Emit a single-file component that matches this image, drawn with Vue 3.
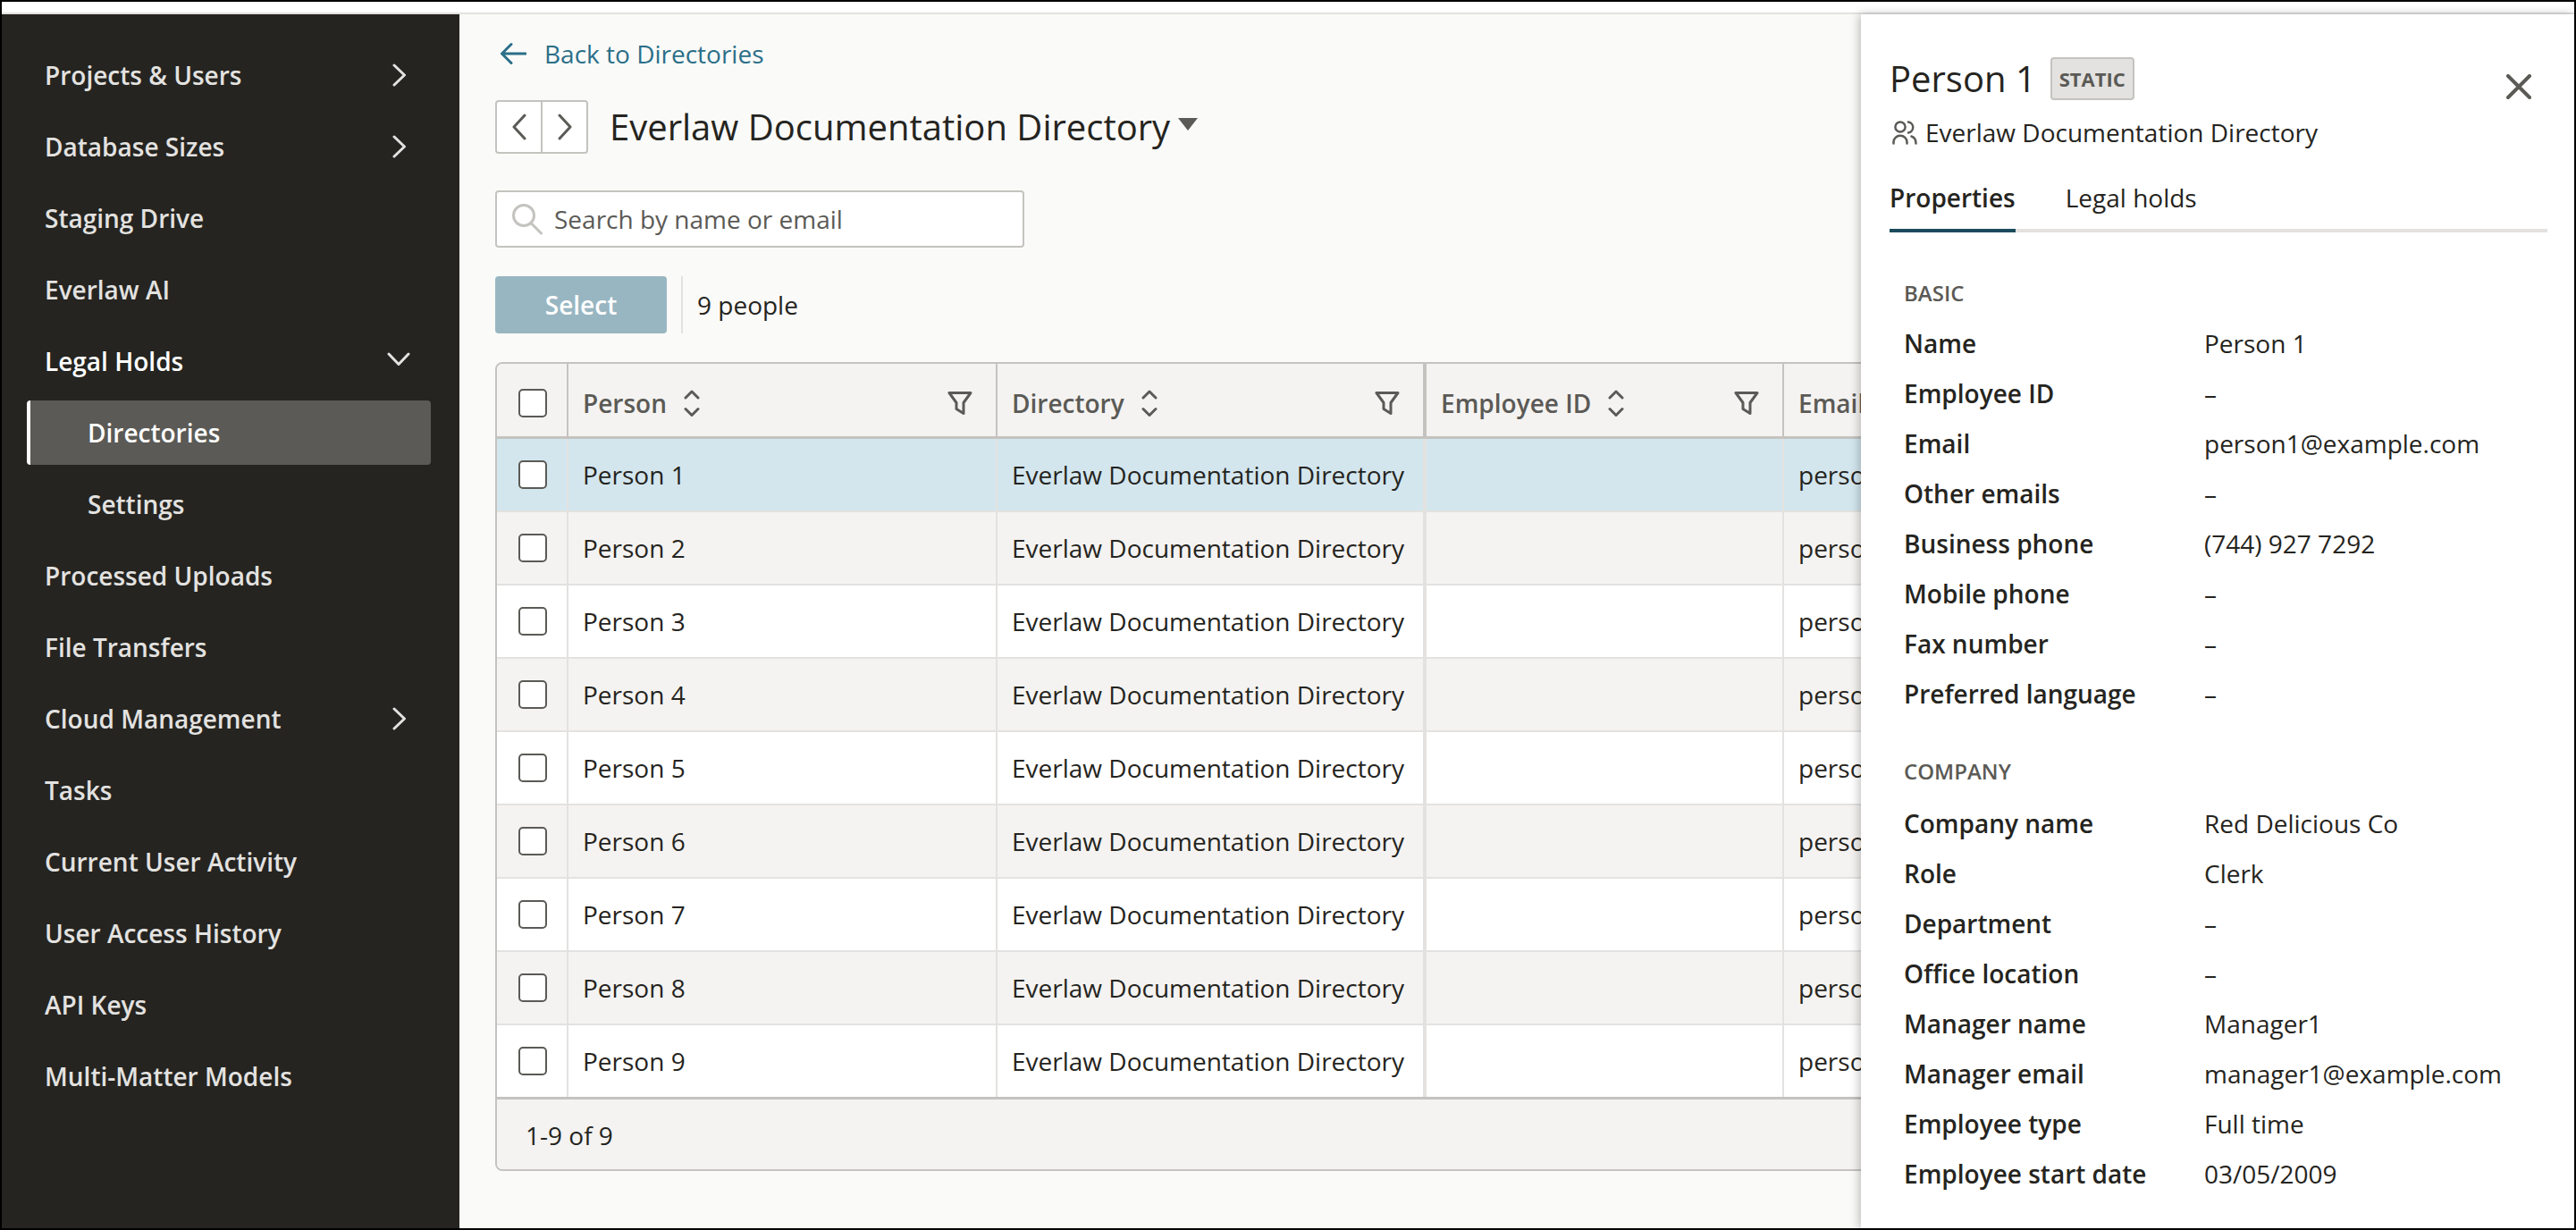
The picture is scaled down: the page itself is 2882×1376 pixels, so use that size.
<script setup>
const navItems = [
  { label: 'Projects & Users', icon: 'right' },
  { label: 'Database Sizes', icon: 'right' },
  { label: 'Staging Drive' },
  { label: 'Everlaw AI' },
  { label: 'Legal Holds', icon: 'down', open: true },
  { label: 'Directories', sub: true, active: true },
  { label: 'Settings', sub: true },
  { label: 'Processed Uploads' },
  { label: 'File Transfers' },
  { label: 'Cloud Management', icon: 'right' },
  { label: 'Tasks' },
  { label: 'Current User Activity' },
  { label: 'User Access History' },
  { label: 'API Keys' },
  { label: 'Multi-Matter Models' }
]
const people = [1, 2, 3, 4, 5, 6, 7, 8, 9]
const columns = [
  { label: 'Person', controls: true },
  { label: 'Directory', controls: true },
  { label: 'Employee ID', controls: true },
  { label: 'Email', controls: false }
]
const basic = [
  ['Name', 'Person 1'],
  ['Employee ID', '–'],
  ['Email', 'person1@example.com'],
  ['Other emails', '–'],
  ['Business phone', '(744) 927 7292'],
  ['Mobile phone', '–'],
  ['Fax number', '–'],
  ['Preferred language', '–']
]
const company = [
  ['Company name', 'Red Delicious Co'],
  ['Role', 'Clerk'],
  ['Department', '–'],
  ['Office location', '–'],
  ['Manager name', 'Manager1'],
  ['Manager email', 'manager1@example.com'],
  ['Employee type', 'Full time'],
  ['Employee start date', '03/05/2009']
]
</script>

<template>
  <div class="frame">
    <div class="topbar"></div>
    <div class="body">
      <nav class="sidebar">
        <a
          v-for="item in navItems"
          :key="item.label"
          class="nav-item"
          :class="{ sub: item.sub, active: item.active, open: item.open }"
        >
          <span>{{ item.label }}</span>
          <svg v-if="item.icon === 'right'" class="nav-chevron" width="16" height="26" viewBox="0 0 16 26">
            <path d="M2 2 L13.5 13 L2 24" />
          </svg>
          <svg v-if="item.icon === 'down'" class="nav-chevron down" width="26" height="16" viewBox="0 0 26 16">
            <path d="M2 2 L13 13.5 L24 2" />
          </svg>
        </a>
      </nav>

      <main class="main">
        <a class="back">
          <svg width="30" height="26" viewBox="0 0 30 26">
            <path d="M29 13 H3 M13 2.5 L2.5 13 L13 23.5" />
          </svg>
          <span>Back to Directories</span>
        </a>

        <div class="title-row">
          <div class="pager">
            <button class="pager-btn">
              <svg width="20" height="30" viewBox="0 0 20 30"><path d="M16 2 L4 15 L16 28" /></svg>
            </button>
            <button class="pager-btn">
              <svg width="20" height="30" viewBox="0 0 20 30"><path d="M4 2 L16 15 L4 28" /></svg>
            </button>
          </div>
          <h1 class="title">Everlaw Documentation Directory</h1>
          <span class="caret"></span>
        </div>

        <label class="search">
          <svg width="36" height="38" viewBox="0 0 36 38">
            <circle cx="14" cy="15" r="11.5" />
            <path d="M22.5 24 L33.5 35" />
          </svg>
          <span>Search by name or email</span>
        </label>

        <div class="actions">
          <button class="select-btn">Select</button>
          <span class="count">9 people</span>
        </div>

        <section class="table">
          <div class="row head">
            <div class="cell check-cell"><span class="checkbox"></span></div>
            <div v-for="col in columns" :key="col.label" class="cell">
              <span>{{ col.label }}</span>
              <template v-if="col.controls">
                <svg class="sort" width="18" height="32" viewBox="0 0 18 32">
                  <path d="M2 10 L9 3 L16 10 M2 22.5 L9 29.5 L16 22.5" />
                </svg>
                <svg class="filter" width="28" height="28" viewBox="0 0 28 28">
                  <path d="M2 2.5 H26 L18 13.5 V25.5 L10 20.5 V13.5 Z" />
                </svg>
              </template>
            </div>
          </div>
          <div
            v-for="n in people"
            :key="n"
            class="row"
            :class="{ selected: n === 1, shaded: n % 2 === 0 }"
          >
            <div class="cell check-cell"><span class="checkbox"></span></div>
            <div class="cell">Person {{ n }}</div>
            <div class="cell">Everlaw Documentation Directory</div>
            <div class="cell"></div>
            <div class="cell">person{{ n }}@example.com</div>
          </div>
          <div class="table-foot">1-9 of 9</div>
        </section>
      </main>
    </div>

    <aside class="panel">
      <div class="panel-title">
        <h2>Person 1</h2>
        <span class="badge">STATIC</span>
      </div>
      <svg class="close" width="28" height="28" viewBox="0 0 28 28">
        <path d="M2 2 L26 26 M26 2 L2 26" />
      </svg>
      <div class="panel-sub">
        <svg width="28" height="28" viewBox="0 0 28 28">
          <circle cx="9" cy="8" r="5.6" />
          <path d="M18 2.6 A6 6 0 0 1 18 14.5 M1.5 26.5 V25 A7.5 7.2 0 0 1 16.5 25 V26.5 M21.5 18.5 Q26.5 20 26.5 26.5" />
        </svg>
        <span>Everlaw Documentation Directory</span>
      </div>
      <div class="tabs">
        <span class="tab active">Properties</span>
        <span class="tab">Legal holds</span>
      </div>

      <h3 class="section first">BASIC</h3>
      <div v-for="f in basic" :key="f[0]" class="field">
        <span class="field-label">{{ f[0] }}</span>
        <span>{{ f[1] }}</span>
      </div>

      <h3 class="section second">COMPANY</h3>
      <div v-for="f in company" :key="f[0]" class="field">
        <span class="field-label">{{ f[0] }}</span>
        <span>{{ f[1] }}</span>
      </div>
    </aside>
  </div>
</template>

<style>
html, body { margin: 0; padding: 0; background: #000; }
</style>

<style scoped>
* { box-sizing: border-box; }
svg { display: block; flex: none; fill: none; }

.frame {
  position: relative;
  width: 2882px;
  height: 1376px;
  border: 2px solid #000;
  background: #fff;
  overflow: hidden;
  display: flex;
  flex-direction: column;
  font-family: "Open Sans", "Noto Sans", sans-serif;
  font-size: 28px;
  line-height: 40px;
  color: #252420;
}
.topbar { height: 14px; flex: none; background: #fff; border-bottom: 2px solid #e3e2e0; }
.body { flex: 1; min-height: 0; display: flex; }

/* sidebar */
.sidebar {
  width: 512px;
  flex: none;
  background: #252420;
  padding-top: 28px;
  display: flex;
  flex-direction: column;
}
.nav-item {
  height: 80px;
  flex: none;
  display: flex;
  align-items: center;
  padding-left: 48px;
  color: #e3e2e0;
  font-weight: 600;
  position: relative;
}
.nav-item.open { color: #fff; }
.nav-item.sub { padding-left: 96px; }
.nav-item.active {
  height: 72px;
  margin: 4px 32px 4px 28px;
  padding-left: 64px;
  background: #5b5a56;
  border-left: 4px solid #fff;
  border-radius: 4px;
  color: #fff;
}
.nav-chevron { position: absolute; left: 437px; top: 27px; }
.nav-chevron path { stroke: #e3e2e0; stroke-width: 3; stroke-linecap: round; stroke-linejoin: round; }
.nav-chevron.down { left: 431px; top: 30px; }

/* main: the table runs on beneath the side panel and is cut off there */
.main {
  flex: 1;
  min-width: 0;
  background: #fafaf8;
  padding: 24px 778px 0 40px;
  display: flex;
  flex-direction: column;
  overflow: hidden;
}
.back { display: flex; align-items: center; height: 40px; color: #2b6f88; }
.back svg { margin: 0 20px 0 5px; }
.back path { stroke: #2b6f88; stroke-width: 3; stroke-linecap: round; stroke-linejoin: round; }

.title-row { display: flex; align-items: center; height: 60px; margin-top: 32px; }
.pager {
  display: flex;
  width: 104px;
  height: 60px;
  border: 2px solid #c4c3bf;
  border-radius: 4px;
  background: #fff;
}
.pager-btn {
  flex: 1;
  padding: 0;
  border: 0;
  background: none;
  display: flex;
  align-items: center;
  justify-content: center;
}
.pager-btn + .pager-btn { border-left: 2px solid #c4c3bf; }
.pager-btn path { stroke: #5b5a56; stroke-width: 3; stroke-linecap: round; stroke-linejoin: round; }
.title { margin: 0 0 0 24px; font-size: 40px; line-height: 60px; font-weight: 400; }
.caret {
  margin: -6px 0 0 9px;
  width: 0;
  height: 0;
  border-left: 11.5px solid transparent;
  border-right: 11.5px solid transparent;
  border-top: 14px solid #5b5a56;
}

.search {
  width: 592px;
  height: 64px;
  margin-top: 41px;
  display: flex;
  align-items: center;
  padding-left: 16px;
  background: #fff;
  border: 2px solid #c4c3bf;
  border-radius: 4px;
  color: #5b5a56;
}
.search svg { margin-right: 12px; }
.search circle, .search path { stroke: #c4c3bf; stroke-width: 3; stroke-linecap: round; }

.actions { display: flex; align-items: center; height: 64px; margin-top: 32px; }
.select-btn {
  width: 192px;
  height: 64px;
  padding: 0;
  border: 0;
  border-radius: 4px;
  background: #98b6c2;
  color: #fff;
  font: 600 28px/40px "Open Sans", "Noto Sans", sans-serif;
}
.count {
  height: 64px;
  margin-left: 16px;
  padding-left: 16px;
  border-left: 2px solid #e3e2e0;
  display: flex;
  align-items: center;
}

/* table */
.table {
  margin-top: 32px;
  flex: none;
  height: 905px;
  border: 2px solid #c4c3bf;
  border-radius: 8px;
  overflow: hidden;
  background: #fff;
}
.row {
  display: grid;
  grid-template-columns: 80px 480px 480px 400px 1fr;
  height: 82px;
  background: #fff;
  border-bottom: 2px solid #e3e2e0;
}
.row.shaded { background: #f4f3f1; }
.row.selected { background: #d3e6ee; }
.row.head {
  height: 84px;
  background: #f4f3f1;
  border-bottom: 3px solid #c4c3bf;
  color: #5b5a56;
  font-weight: 600;
}
.cell {
  display: flex;
  align-items: center;
  min-width: 0;
  padding: 0 26px 0 16px;
  border-right: 2px solid #e3e2e0;
  white-space: nowrap;
  overflow: hidden;
}
.cell:nth-child(3) { border-right-width: 4px; }
.cell:last-child { border-right: 0; }
.row.head .cell { border-right-color: #c4c3bf; padding-top: 6px; }
.check-cell { padding: 0 0 0 24px; }
.checkbox {
  flex: none;
  width: 32px;
  height: 32px;
  background: #fff;
  border: 2px solid #5b5a56;
  border-radius: 5px;
}
.sort { margin-left: 19px; }
.sort path, .filter path { stroke: #5b5a56; stroke-width: 3; stroke-linecap: round; stroke-linejoin: round; }
.filter { margin-left: auto; }
.table-foot {
  height: 82px;
  margin-top: -2px;
  display: flex;
  align-items: center;
  padding-left: 32px;
  background: #f4f3f1;
  border-top: 3px solid #c4c3bf;
}

/* panel */
.panel {
  position: absolute;
  top: 14px;
  right: 0;
  bottom: 0;
  width: 798px;
  padding: 48px 30px 0 32px;
  background: #fff;
  box-shadow: -2px 0 10px rgba(0, 0, 0, 0.25);
}
.panel-title { display: flex; align-items: center; height: 48px; }
.panel-title h2 { margin: 0; font-size: 40px; line-height: 48px; font-weight: 400; }
.badge {
  margin-left: 16px;
  width: 94px;
  height: 48px;
  display: flex;
  align-items: center;
  justify-content: center;
  background: #e3e2e0;
  border: 2px solid #c4c3bf;
  border-radius: 4px;
  color: #5b5a56;
  font-size: 22px;
  font-weight: 700;
}
.close { position: absolute; left: 722px; top: 67px; }
.close path { stroke: #5b5a56; stroke-width: 4; stroke-linecap: round; }
.panel-sub { display: flex; align-items: center; height: 40px; margin-top: 16px; padding-left: 3px; }
.panel-sub svg { margin-right: 9px; }
.panel-sub path, .panel-sub circle { stroke: #5b5a56; stroke-width: 2.5; stroke-linecap: round; }
.tabs { display: flex; gap: 56px; margin-top: 33px; border-bottom: 4px solid #e3e2e0; }
.tab { padding-bottom: 15px; }
.tab.active { font-weight: 600; margin-bottom: -4px; border-bottom: 4px solid #1c4a5c; }
.section {
  margin: 0 0 10px 16px;
  font-size: 24px;
  line-height: 40px;
  font-weight: 600;
  color: #5b5a56;
}
.section.first { margin-top: 48px; margin-bottom: 8px; }
.section.second { margin-top: 39px; }
.field {
  display: grid;
  grid-template-columns: 336px 1fr;
  height: 56px;
  align-items: center;
  padding-left: 16px;
}
.field-label { font-weight: 600; }
</style>
